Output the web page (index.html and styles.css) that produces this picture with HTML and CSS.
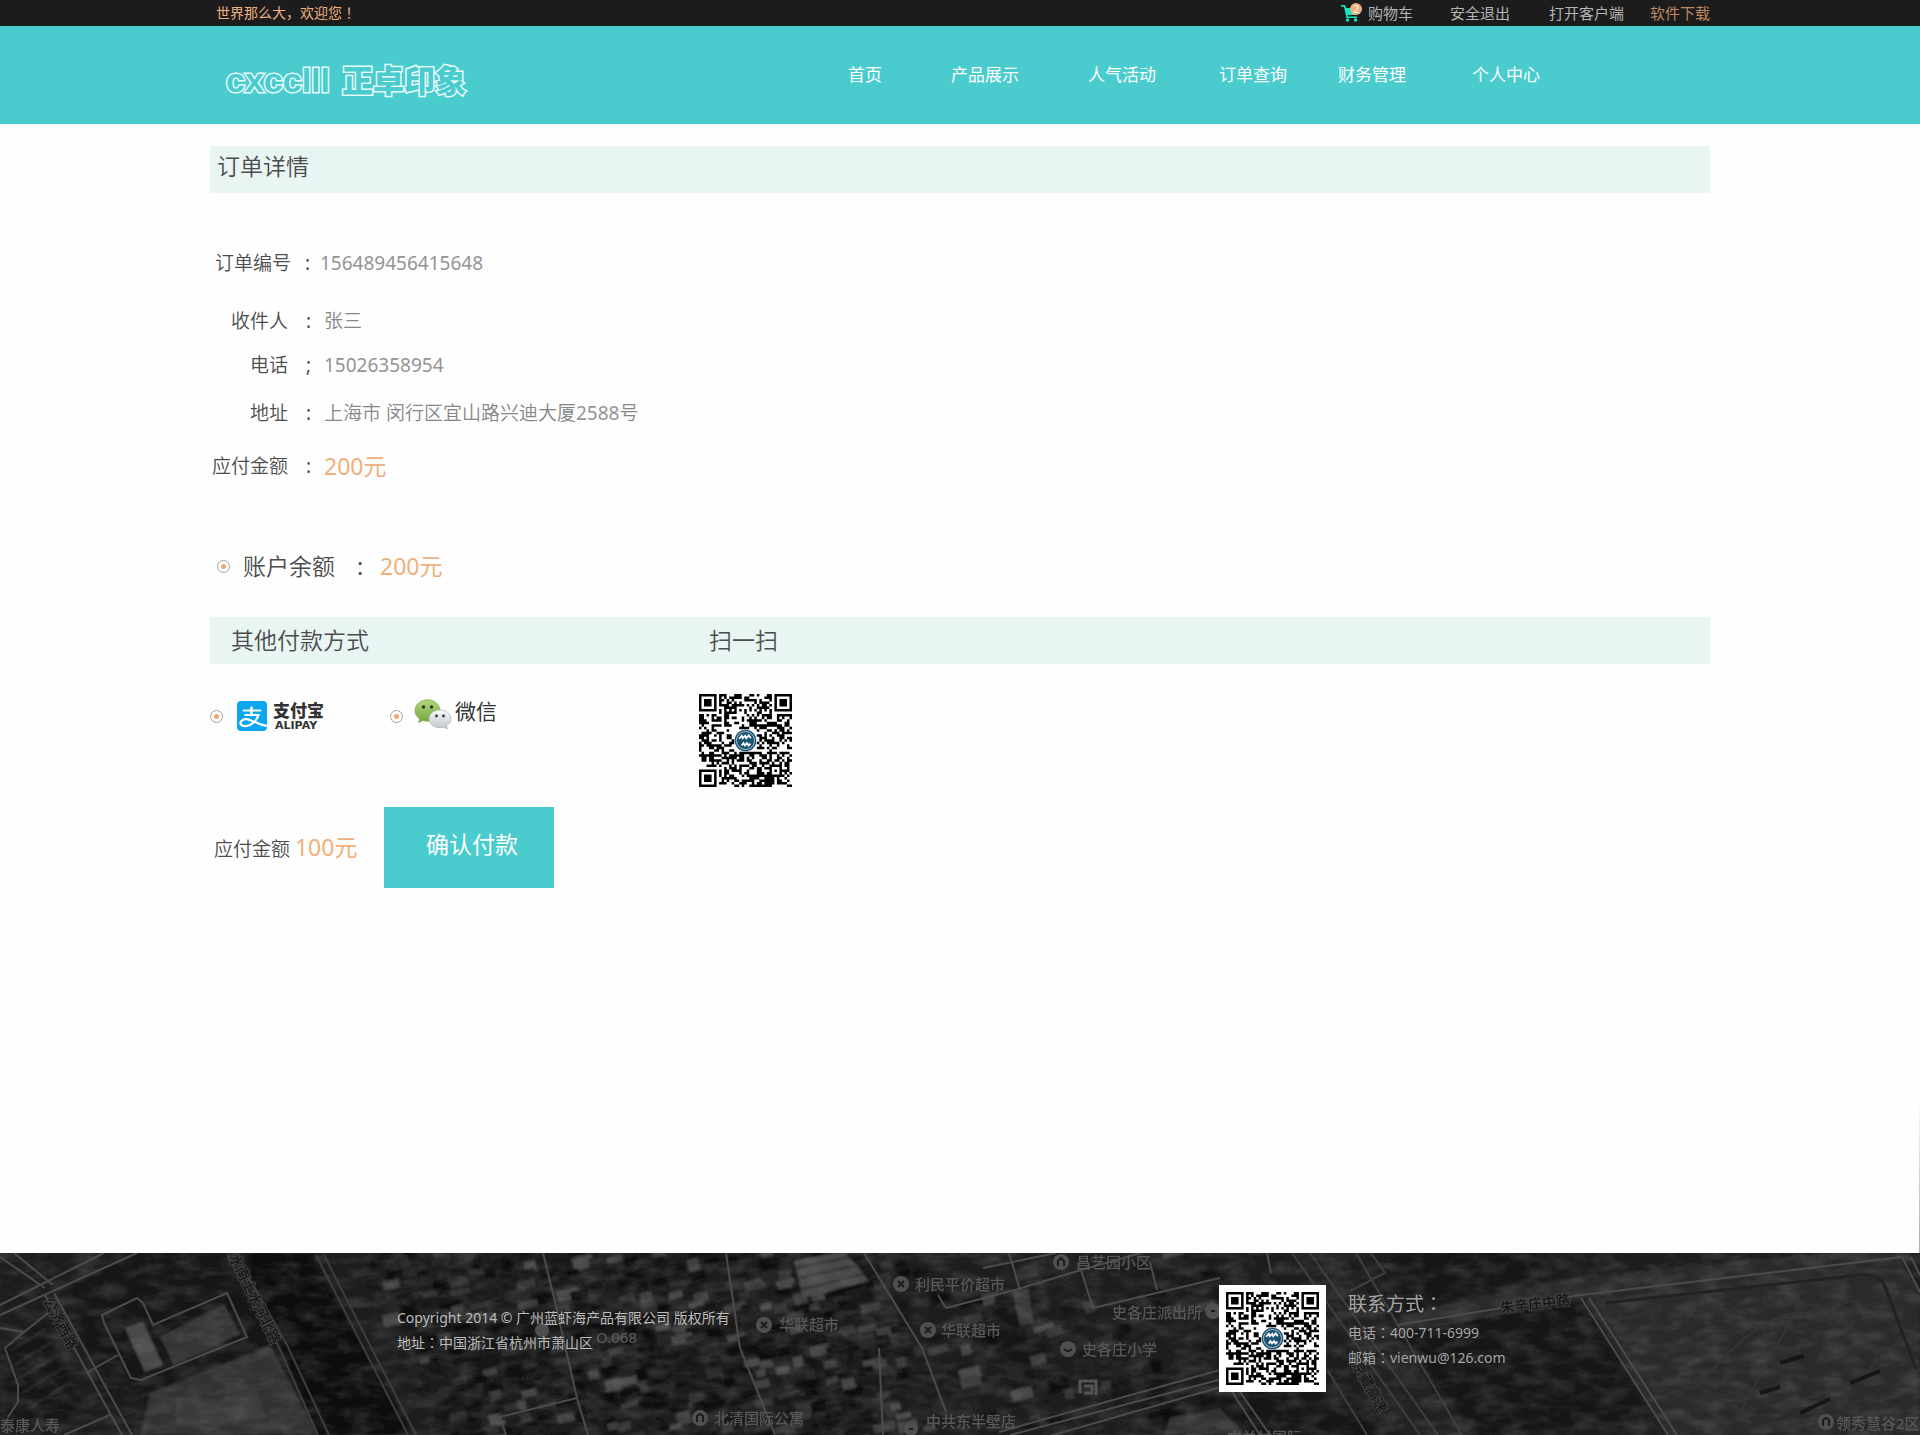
FILE: index.html
```html
<!DOCTYPE html>
<html lang="zh-CN">
<head>
<meta charset="utf-8">
<meta name="viewport" content="width=device-width, initial-scale=1">
<title>订单详情</title>
<link rel="stylesheet" href="styles.css">
</head>
<body>
<div class="topbar">
  <div class="wrap topbar-row">
    <p class="welcome">世界那么大，欢迎您<span class="punct" lang="zh-TW">！</span></p>
    <ul class="quick">
      <li>
        <a class="cart" href="#cart">
          <span class="cart-icon">
            <svg width="18" height="18" viewBox="0 0 18 18" aria-hidden="true">
              <path d="M0 1h4l1.300 3H17l-1.500 7H6.500L7 12.500h9v1.500H5.500L3 2.800H0z" fill="#10e8c4"/>
              <circle cx="6.500" cy="16" r="1.700" fill="#10e8c4"/>
              <circle cx="14.500" cy="16" r="1.700" fill="#10e8c4"/>
            </svg>
            <span class="badge">2</span>
          </span>
          购物车
        </a>
      </li>
      <li><a href="#logout">安全退出</a></li>
      <li><a href="#client">打开客户端</a></li>
      <li><a class="download" href="#download">软件下载</a></li>
    </ul>
  </div>
</div>

<header class="header">
  <div class="wrap header-row">
    <a class="logo" href="#home"><span class="logo-latin">cxcclll</span><span class="logo-cn">正卓印象</span></a>
    <nav class="nav">
      <a href="#home">首页</a>
      <a href="#products">产品展示</a>
      <a href="#events">人气活动</a>
      <a href="#orders">订单查询</a>
      <a href="#finance">财务管理</a>
      <a href="#me">个人中心</a>
    </nav>
  </div>
</header>

<main class="main">
  <form class="wrap" action="#">
    <h1 class="bar bar-title">订单详情</h1>

    <dl class="details order-no">
      <dt>订单编号</dt><dd class="colon">:</dd><dd class="number">156489456415648</dd>
    </dl>
    <dl class="details recipient">
      <dt>收件人</dt><dd class="colon">:</dd><dd>张三</dd>
      <dt>电话</dt><dd class="colon">;</dd><dd class="number">15026358954</dd>
      <dt>地址</dt><dd class="colon">:</dd><dd>上海市 闵行区宜山路兴迪大厦<span class="number">2588</span>号</dd>
      <dt>应付金额</dt><dd class="colon">:</dd><dd class="amount">200元</dd>
    </dl>

    <div class="balance">
      <input class="radio" type="radio" name="pay" id="pay-balance" checked>
      <label for="pay-balance">账户余额</label>
      <span class="colon">:</span>
      <span class="amount">200元</span>
    </div>

    <div class="bar bar-methods">
      <h2>其他付款方式</h2>
      <h2>扫一扫</h2>
    </div>

    <div class="methods">
      <div class="method">
        <input class="radio" type="radio" name="pay" id="pay-alipay">
        <label class="alipay" for="pay-alipay">
          <svg width="30" height="30" viewBox="0 0 30 30" aria-hidden="true">
            <rect width="30" height="30" rx="4" fill="#0aa6f0"/>
            <g fill="none" stroke="#fff" stroke-linecap="round">
              <path d="M6.500 9.500h17" stroke-width="1.800"/>
              <path d="M14.500 6.500V14" stroke-width="2.600"/>
              <path d="M8 14h13.500" stroke-width="1.800"/>
              <path d="M21.500 14c-1.500 5-6 10-12 11-5 .6-7-2-5.500-4.600 1.700-2.700 6-2.600 10-1 5 2 9 4.600 15.500 5.400" stroke-width="2.200"/>
            </g>
          </svg>
          <span class="alipay-name"><span class="alipay-cn">支付宝</span><span class="alipay-en">ALIPAY</span></span>
        </label>
      </div>
      <div class="method">
        <input class="radio" type="radio" name="pay" id="pay-wechat">
        <label class="wechat" for="pay-wechat">
          <svg width="38" height="30" viewBox="0 0 38 30" aria-hidden="true">
            <defs>
              <linearGradient id="wxGreen" x1="0" y1="0" x2="0" y2="1"><stop offset="0" stop-color="#b3d77c"/><stop offset="1" stop-color="#71a63c"/></linearGradient>
              <linearGradient id="wxGrey" x1="0" y1="0" x2="0" y2="1"><stop offset="0" stop-color="#f6f7f8"/><stop offset="1" stop-color="#c3c8cc"/></linearGradient>
            </defs>
            <path d="M13.500.8C6.500.8 1 5.600 1 11.600c0 3.500 1.800 6.400 4.700 8.300l-1.200 3.700 4.400-2.100c1.500.4 3 .7 4.600.7 7 0 12.500-4.700 12.500-10.600S20.500.8 13.500.8z" fill="url(#wxGreen)" stroke="#7fa84e" stroke-width=".7"/>
            <path d="M26 10.800c-6 0-11 4-11 9s5 8.800 11 8.800c1.200 0 2.300-.1 3.400-.4l4 1.600-1-3c2.800-1.700 4.500-4.200 4.500-7 0-5-4.900-9-10.900-9z" fill="url(#wxGrey)" stroke="#a9aeb2" stroke-width=".7"/>
            <g fill="#333"><circle cx="9.500" cy="8" r="1.700"/><circle cx="17.500" cy="8" r="1.700"/><circle cx="22.500" cy="17" r="1.400"/><circle cx="29.500" cy="17" r="1.400"/></g>
          </svg>
          <span>微信</span>
        </label>
      </div>
      <svg class="qr" viewBox="0 0 37 37" role="img" aria-label="付款二维码"></svg>
    </div>

    <div class="pay">
      <p class="due">应付金额 <strong class="amount">100元</strong></p>
      <button class="confirm" type="submit">确认付款</button>
    </div>
  </form>
</main>

<footer class="footer">
  <svg class="map" viewBox="0 0 1920 182" preserveAspectRatio="xMidYMid slice" aria-hidden="true">
    <defs>
      <filter id="soft"><feGaussianBlur stdDeviation="0.800"/></filter>
      <filter id="faint"><feGaussianBlur stdDeviation="0.500"/></filter>
      <filter id="grain" x="0" y="0" width="1" height="1">
        <feTurbulence type="fractalNoise" baseFrequency="0.040 0.090" numOctaves="4" seed="4"/>
        <feColorMatrix values="0 0 0 0 .3  0 0 0 0 .3  0 0 0 0 .3  1.600 0 0 0 -.620"/>
      </filter>
    </defs>
    <rect width="1920" height="182" fill="#1d1d1d"/>
    <g filter="url(#soft)">
      <g id="houses"></g>
      <path d="M70 32L137 0h90L278 92 150 150 100 140z" fill="#171717"/>
      <path d="M150 140L270 92 318 182H140z" fill="#303030"/>
      <path d="M125 75l18-6 20 43-18 7z" fill="#4a4a4a"/>
      <path d="M160 84l64-33 16 30-66 32z" fill="#343434"/>
      <path d="M176 143l40 4 40-12 10 30-90 8z" fill="#3b3b3b"/>
      <path d="M5 95l40-25 40 90-60 22H8z" fill="#191919"/>
      <path d="M10 98l36-22M14 112l38-23M18 126l40-24M22 140l42-26M28 156l44-28" stroke="#262626" stroke-width="3"/>
      <path d="M241 0h69l102 182h-94z" fill="#101010"/>
      <path d="M794 8l50-10 25 30-66 17z" fill="#484848"/>
      <path d="M797 15l52-11M800 25l58-13M802 36l62-15" stroke="#2e2e2e" stroke-width="2"/>
      <path d="M1292 0h50l120 182h-60z" fill="#232323"/>
      <path d="M1220 145l100-28 60 65h-160z" fill="#181818"/>
      <path d="M1170 165l50-10 25 27h-80z" fill="#333"/>
      <path d="M1390 0h160l-20 25-120 40z" fill="#181818"/>
      <path d="M1400 62l160-36 350-34v14L1582 46 1400 82z" fill="#2b2b2b"/>
      <path d="M1400 80l180-32 70 115-170 19z" fill="#171717"/>
      <path d="M1585 46L1900 8l20 30v144H1668z" fill="#2c2c2c"/>
      <path d="M995 42l20-4 12 50 8 45-14 2-14-5-14-60z" fill="#121212"/>
      <path d="M1012 38l16-3 6 35-14 3z" fill="#3b3b3b"/>
    </g>
    <rect width="1920" height="182" filter="url(#grain)" opacity=".3"/>
    <g fill="none" stroke="#4c4c4c" stroke-width="2" filter="url(#faint)">
      <path d="M0 4l45 31M14 0l39 32M0 62L137 0M0 52L104 0M45 42l77 140M54 40l78 142M64 182l46-20"/>
      <path d="M102 62l35-17 6 5 10 22 74-32 20 44-106 43-10-2-27-55zM88 119l30-17"/>
      <path d="M0 75l24 4L5 95l13 37v17L8 164M24 79l24-19"/>
      <path d="M227 2l51 90 40 90M235 0l52 92 42 90M316 2l92 180M324 2l92 180" stroke="#3d3d3d"/>
      <path d="M543 0l12 49 22 96 11 37M577 145l-77 19 6 18"/>
      <path d="M726 0l14 95 35 87M864 0l58 95 24 64M879 95l4 87"/>
      <path d="M938 42l8 13 69-18 66-20M1009 0l11 37M983 15l73-15M1081 17l12 38 127-30M1150 9l7 28M1081 17l60-17"/>
      <path d="M999 179l221-62M1010 182l216-57M1018 192l210-60M1267 0l4 20M1232 139l28 43M1240 139l30 43"/>
      <path d="M1292 0l128 182M1310 0l128 182M1356 0l106 182M1328 118l39 64M1350 38l35-18-14-20" stroke="#3f3f3f"/>
      <path d="M1397 72l184-30L1902 4M1581 45l87 137M1589 45l88 137M1902 4l18 35M1911 4l9 18"/>
      <path d="M1605 50l255-28q20-2 26 14l30 80" stroke="#222" stroke-width="3"/>
      <path d="M1700 130q60-70 100-70t70 30-80 60M1740 160l60-110" stroke="#353535"/>
      <path d="M1780 110l24-7M1800 160l30-14M1850 130l30-12M1760 140l20-6" stroke="#161616" stroke-width="4"/>
    </g>
    <g class="map-labels" filter="url(#faint)">
      <g class="map-pins"><circle cx="901" cy="31" r="8"/><circle cx="1061" cy="9" r="8"/><circle cx="764" cy="72" r="8"/><circle cx="928" cy="77" r="8"/><circle cx="1213" cy="58" r="8"/><circle cx="1068" cy="96" r="8"/><circle cx="700" cy="165" r="8"/><circle cx="911" cy="176" r="7"/><circle cx="542" cy="77" r="7"/><circle cx="1826" cy="169" r="8"/></g>
      <path class="map-glyphs" d="M898 28l6 6m0-6l-6 6M1058 13V8l3-3 3 3v5M761 69l6 6m0-6l-6 6M925 74l6 6m0-6l-6 6M1211 58h4M1064 96q4 4 8 0M697 169v-6l3-2 3 2v6M909 176h4M1823 173v-6l3-2 3 2v6"/>
      <path d="M1080 140v-12h16v14M1084 133h8v7h-8" fill="none" stroke="#555" stroke-width="3"/>
      <text x="915" y="37">利民平价超市</text>
      <text x="1076" y="15">昌艺园小区</text>
      <text x="779" y="77">华联超市</text>
      <text x="941" y="83">华联超市</text>
      <text x="1112" y="65">史各庄派出所</text>
      <text x="1082" y="102">史各庄小学</text>
      <text x="714" y="171">北清国际公寓</text>
      <text x="926" y="174">中共东半壁店</text>
      <text x="596" y="90">O.068</text>
      <text x="0" y="178">泰康人寿</text>
      <text x="1836" y="176">领秀慧谷2区</text>
      <text x="1227" y="190">中关村国际</text>
      <text class="on-road" transform="translate(1501 60) rotate(-7)">朱辛庄中路</text>
      <text class="on-road" transform="translate(1352 112) rotate(61)">京藏高速</text>
      <text class="on-road" transform="translate(43 48) rotate(62)">公济西路</text>
      <text class="on-road" transform="translate(229 4) rotate(64)">水南土水河北路</text>
    </g>
  </svg>
  <div class="footer-row">
    <div class="legal">
      <p>Copyright 2014 © 广州蓝虾海产品有限公司 版权所有</p>
      <p>地址<span class="punct" lang="zh-TW">：</span>中国浙江省杭州市萧山区</p>
    </div>
    <div class="qr-card"><svg class="qr" viewBox="0 0 37 37" role="img" aria-label="公众号二维码"></svg></div>
    <address class="contact">
      <h3>联系方式<span class="punct" lang="zh-TW">：</span></h3>
      <p>电话<span class="punct" lang="zh-TW">：</span>400-711-6999</p>
      <p>邮箱<span class="punct" lang="zh-TW">：</span><a href="mailto:vienwu@126.com">vienwu@126.com</a></p>
    </address>
  </div>
</footer>
<script src="script.js"></script>
</body>
</html>
```
FILE: styles.css
```css
* { box-sizing: border-box; }

body {
  margin: 0;
  min-height: 100vh;
  display: flex;
  flex-direction: column;
  background: #fefefe;
  color: #4c4c4c;
  font-family: "Noto Sans", "Noto Sans CJK SC", sans-serif;
  font-size: 19px;
  line-height: 28px;
}

h1, h2, h3, p, ul, dl, dd { margin: 0; padding: 0; font-weight: inherit; }
ul { list-style: none; }
a { color: inherit; text-decoration: none; }

/* centred full-width punctuation; the zero line height keeps its taller font from growing the line */
.punct { font-family: "Noto Sans CJK TC", sans-serif; line-height: 0; }

.wrap { width: 100%; max-width: 1500px; margin: 0 auto; }

/* top bar */
.topbar { background: #1c1c1c; color: #b4b4b4; font-size: 15px; line-height: 26px; }
.topbar-row { display: flex; justify-content: space-between; padding-left: 6px; }
.welcome { color: #eeb080; font-size: 14px; }
.quick { display: grid; grid-template-columns: 109px 99px 101px 60px; }
.cart { display: flex; gap: 9px; }
.cart-icon { position: relative; width: 18px; height: 18px; margin-top: 4px; line-height: 0; }
.badge {
  position: absolute; top: -1px; left: 9px;
  width: 12px; height: 12px; border-radius: 50%;
  background: #eeb080; color: #fff;
  font-size: 10px; line-height: 12px; text-align: center;
}
.download { color: #bd8a62; }

/* header */
.header { background: #4acbce; color: #fff; }
.header-row { display: flex; align-items: center; justify-content: space-between; height: 98px; padding: 0 170px 0 16px; }
.logo {
  display: flex; align-items: center; gap: 12px;
  color: #4acbce; line-height: 40px; padding-top: 10px;
  -webkit-text-stroke: 3px #e8fbfb; paint-order: stroke fill;
}
.logo-latin { font-family: "Liberation Sans", sans-serif; font-weight: 700; font-size: 34px; }
.logo-cn { font-weight: 900; font-size: 31px; }
.nav {
  display: grid; grid-template-columns: 103px 137px 131px 119px 134px 68px;
  font-size: 17px;
}

/* order */
.main {
  flex: 1; padding: 22px 0 40px;
  background: linear-gradient(#fff, #aaa) no-repeat right bottom / 1px 156px;
  font-weight: 350;
}
.bar { min-height: 47px; background: #e8f5f3; font-size: 23px; line-height: 47px; }
.bar-title { padding-left: 7px; line-height: 41px; }
.bar-methods { display: grid; grid-template-columns: 478px 1fr; padding-left: 21px; margin-top: 35px; }
.bar-methods h2 { font-size: 23px; }

.details { display: grid; }
.order-no { grid-template-columns: 81px 29px 1fr; margin-top: 56px; }
.order-no .colon { padding-left: 14px; }
.recipient {
  grid-template-columns: 78px 36px 1fr;
  grid-template-rows: 44px 48px 53px 28px;
  margin-top: 30px;
}
.recipient .colon { padding-left: 18px; }
.details dt { justify-self: end; white-space: nowrap; }
.details dd { color: #868686; }
.details .number { color: #949494; font-weight: 400; }
.details .colon { color: #4c4c4c; font-weight: 400; }
.details .amount, .amount { color: #efb07c; font-size: 23px; font-weight: 400; }

.balance { display: grid; grid-template-columns: 26px 114px 23px 1fr; align-items: center; margin: 70px 0 0 7px; font-size: 23px; line-height: 32px; }
.balance .colon { font-weight: 400; }
.radio {
  appearance: none; flex: none; width: 13px; height: 13px; margin: 0;
  border: 1px solid #a3a3a3; border-radius: 50%;
  background: radial-gradient(circle, #efa870 2px, transparent 3px);
}

.methods { display: grid; grid-template-columns: 180px 309px 93px; align-items: start; padding-top: 30px; }
.method { display: flex; align-items: center; gap: 14px; height: 30px; margin-top: 7px; }
.method .wechat { display: flex; align-items: center; gap: 3px; font-size: 21px; font-weight: 400; color: #333; }
.method .wechat svg { margin: 0 0 4px -3px; }
.method .wechat span { margin-bottom: 10px; }
.alipay { display: flex; align-items: center; gap: 6px; color: #333; font-weight: 700; }
.alipay-name { display: flex; flex-direction: column; }
.alipay-cn { font-size: 17px; line-height: 18px; font-weight: 900; }
.alipay-en { font-family: "DejaVu Sans", sans-serif; font-size: 11px; line-height: 11px; padding-left: 2px; }
.qr { display: block; width: 93px; height: 93px; }

.pay { display: grid; grid-template-columns: 170px 170px; align-items: center; margin-top: 20px; padding-left: 4px; }
.confirm {
  height: 81px; padding: 0 0 8px 6px; border: 0; border-radius: 0;
  background: #4acbce; color: #fff; font: inherit; font-size: 23px; font-weight: 400; cursor: pointer;
}

/* footer */
.footer { position: relative; overflow: hidden; background: #1d1d1d; color: #bdbdbd; font-size: 14px; line-height: 25px; }
.map { position: absolute; inset: 0; width: 100%; height: 100%; }
.map-labels { font-size: 15px; font-weight: 500; fill: #585858; }
.map-pins { fill: #505050; }
.map-glyphs { fill: none; stroke: #1d1d1d; stroke-width: 2; }
.on-road { fill: #151515; stroke: #404040; stroke-width: 2px; paint-order: stroke; font-size: 14px; }
.footer-row {
  position: relative;
  display: grid; grid-template-columns: 822px 129px 1fr;
  max-width: 1523px; margin-left: auto;
  padding: 32px 0 43px;
}
.legal { padding-top: 20px; }
.qr-card { width: 107px; padding: 7px; background: #fff; }
.contact { font-style: normal; color: #a6a6a6; padding-top: 4px; }
.contact h3 { font-size: 19px; line-height: 31px; }
```
FILE: script.js
```js
// Repeatable pseudo-random sequence, so both codes come out the same.
function sequence(seed) {
  return function () {
    seed = (seed * 1103515245 + 12345) % 2147483648;
    return seed / 2147483648;
  };
}

function drawCode(svg) {
  var n = 37, rand = sequence(42), d = '';
  function inFinder(x, y) {
    return (x < 8 && y < 8) || (x > n - 9 && y < 8) || (x < 8 && y > n - 9);
  }
  function ring(x, y, size) {
    return 'M' + x + ' ' + y + 'h' + size + 'v' + size + 'h-' + size + 'z' +
      'M' + (x + 1) + ' ' + (y + 1) + 'v' + (size - 2) + 'h' + (size - 2) + 'v-' + (size - 2) + 'z';
  }
  for (var y = 0; y < n; y++) {
    for (var x = 0; x < n; x++) {
      var on = rand() < 0.5;
      if (inFinder(x, y)) continue;
      if (x > 27 && x < 33 && y > 27 && y < 33) continue;
      if (Math.abs(x - 18) < 5 && Math.abs(y - 18) < 5) continue;
      if (x === 6 || y === 6) on = (x + y) % 2 === 0;
      if (on) d += 'M' + x + ' ' + y + 'h1v1h-1z';
    }
  }
  [[0, 0], [n - 7, 0], [0, n - 7]].forEach(function (p) {
    d += ring(p[0], p[1], 7) + 'M' + (p[0] + 2) + ' ' + (p[1] + 2) + 'h3v3h-3z';
  });
  d += ring(28, 28, 5) + 'M30 30h1v1h-1z';
  svg.innerHTML =
    '<rect width="37" height="37" fill="#fff"/>' +
    '<path d="' + d + '" fill="#000"/>' +
    '<circle cx="18.5" cy="18.5" r="4.300" fill="#1c5272"/>' +
    '<circle cx="18.5" cy="18.5" r="3.600" fill="none" stroke="#b9d0dc" stroke-width=".350"/>' +
    '<path d="M16 17.800l1-1.200.4 1 1-1 .4 1 1-1.200.8 1.200M17 20.500l.7-1 .6 1 .8-1 .6 1 .8-.8" fill="none" stroke="#fff" stroke-width=".700"/>';
}
document.querySelectorAll('.qr').forEach(drawCode);

// Rooftops of the built-up quarter on the footer map.
(function () {
  var rand = sequence(7), out = '';
  for (var y = -6; y < 190; y += 11) {
    for (var x = 345; x < 1240; x += 17) {
      var skip = x < 345 + y * 0.500 || (x > 900 && rand() < 0.700);
      var g = 16 + Math.floor(Math.pow(rand(), 3) * 58);
      var w = 9 + rand() * 14, h = 5 + rand() * 8;
      var px = x + rand() * 8, py = y + rand() * 5;
      if (skip) continue;
      out += '<rect x="' + px + '" y="' + py + '" width="' + w + '" height="' + h +
        '" fill="rgb(' + g + ',' + g + ',' + g + ')" transform="rotate(-14 ' + px + ' ' + py + ')"/>';
    }
  }
  document.getElementById('houses').innerHTML = out;
})();
```
